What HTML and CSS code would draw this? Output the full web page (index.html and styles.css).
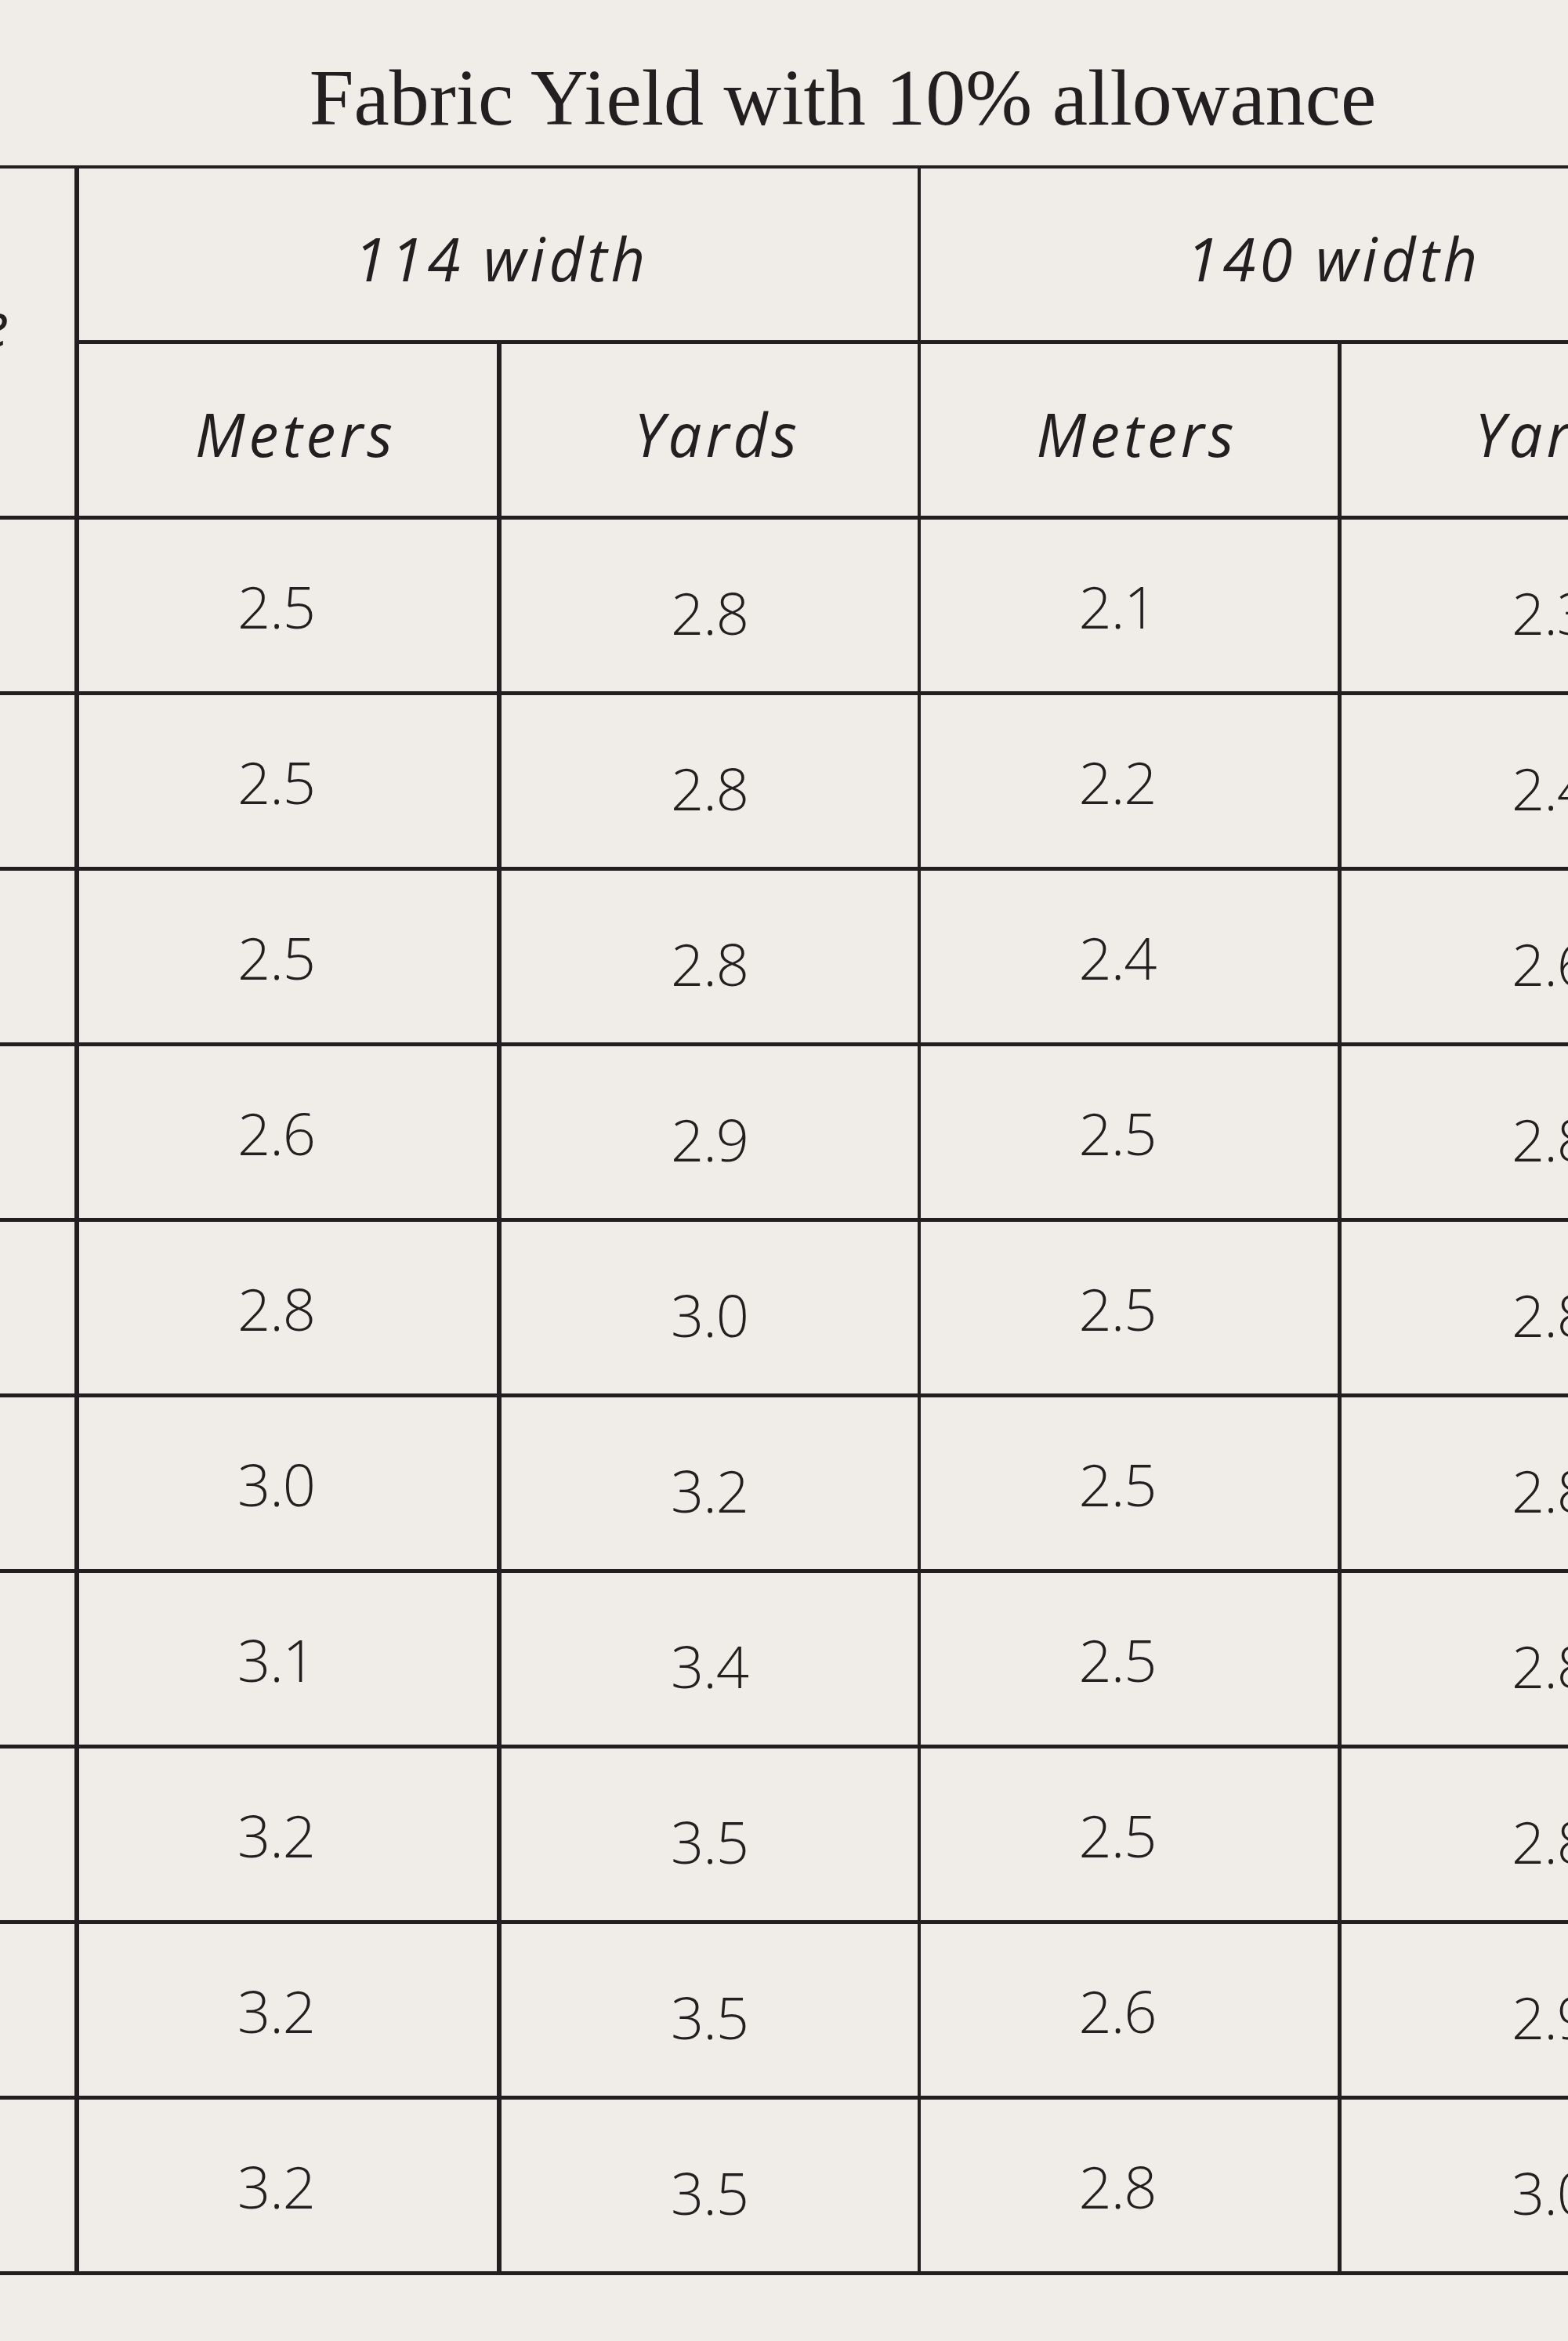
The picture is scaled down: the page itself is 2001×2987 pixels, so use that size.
FILE: index.html
```html
<!DOCTYPE html>
<html lang="en">
<head>
<meta charset="utf-8">
<title>Fabric Yield with 10% allowance</title>
<link rel="stylesheet" href="styles.css">
</head>
<body>
<main class="page">
  <h1 class="title">Fabric Yield with 10% allowance</h1>
  <div class="chart" role="table" aria-label="Fabric Yield with 10% allowance">
    <div class="cell head size c0" role="columnheader">Size</div>
    <div class="cell head group g114" role="columnheader">114 width</div>
    <div class="cell head group g140" role="columnheader">140 width</div>
    <div class="cell head sub m1" role="columnheader">Meters</div>
    <div class="cell head sub y1" role="columnheader">Yards</div>
    <div class="cell head sub m2" role="columnheader">Meters</div>
    <div class="cell head sub y2" role="columnheader">Yards</div>

    <div class="cell c0"></div><div class="cell num m1">2.5</div><div class="cell num y1">2.8</div><div class="cell num m2">2.1</div><div class="cell num y2">2.3</div>
    <div class="cell c0"></div><div class="cell num m1">2.5</div><div class="cell num y1">2.8</div><div class="cell num m2">2.2</div><div class="cell num y2">2.4</div>
    <div class="cell c0"></div><div class="cell num m1">2.5</div><div class="cell num y1">2.8</div><div class="cell num m2">2.4</div><div class="cell num y2">2.6</div>
    <div class="cell c0"></div><div class="cell num m1">2.6</div><div class="cell num y1">2.9</div><div class="cell num m2">2.5</div><div class="cell num y2">2.8</div>
    <div class="cell c0"></div><div class="cell num m1">2.8</div><div class="cell num y1">3.0</div><div class="cell num m2">2.5</div><div class="cell num y2">2.8</div>
    <div class="cell c0"></div><div class="cell num m1">3.0</div><div class="cell num y1">3.2</div><div class="cell num m2">2.5</div><div class="cell num y2">2.8</div>
    <div class="cell c0"></div><div class="cell num m1">3.1</div><div class="cell num y1">3.4</div><div class="cell num m2">2.5</div><div class="cell num y2">2.8</div>
    <div class="cell c0"></div><div class="cell num m1">3.2</div><div class="cell num y1">3.5</div><div class="cell num m2">2.5</div><div class="cell num y2">2.8</div>
    <div class="cell c0"></div><div class="cell num m1">3.2</div><div class="cell num y1">3.5</div><div class="cell num m2">2.6</div><div class="cell num y2">2.9</div>
    <div class="cell c0"></div><div class="cell num m1">3.2</div><div class="cell num y1">3.5</div><div class="cell num m2">2.8</div><div class="cell num y2">3.0</div>
  </div>
</main>
</body>
</html>
```
FILE: styles.css
```css
html, body {
  margin: 0;
  padding: 0;
  overflow: hidden;
  background: #f0ece8;
}

body {
  color: #231f20;
  font-family: "Open Sans", "Liberation Sans", sans-serif;
}

.page {
  width: 2001px;
  min-height: 2987px;
  padding-top: 64px;
  box-sizing: border-box;
  background: #f0ece8;
}

.title {
  margin: 0 0 26px;
  padding-left: 150px;
  font-family: "Liberation Serif", "DejaVu Serif", serif;
  font-weight: 400;
  font-size: 102px;
  line-height: 121px;
  text-align: center;
  color: #231f20;
}

.chart {
  display: grid;
  grid-template-columns: 400px 539px 535px 537px 538px;
  grid-auto-rows: 224px;
  width: 2549px;
  margin-left: -299px;
  border-top: 4px solid #231f20;
}

.cell {
  box-sizing: border-box;
  display: flex;
  align-items: center;
  justify-content: center;
  border-bottom: 5px solid #231f20;
  border-right: 5px solid #231f20;
  line-height: 1;
}

.c0 { border-right-width: 6px; }
.m1 { border-right-width: 6px; }
.y1 { border-right-width: 4px; }
.m2 { border-right-width: 5px; }
.y2 { border-right-width: 5px; }

.head {
  font-style: italic;
  font-weight: 500;
  font-size: 76px;
  letter-spacing: 5px;
  padding-top: 10px;
}

.size {
  grid-row: span 2;
  align-items: flex-start;
  justify-content: flex-end;
  padding-top: 160px;
  padding-right: 84px;
  letter-spacing: 0;
}

.group { grid-column: span 2; }
.g114 { border-right-width: 4px; padding-left: 8px; }
.g140 { border-right-width: 5px; padding-right: 16px; }

.sub { padding-left: 20px; }

.num {
  font-weight: 300;
  font-size: 74px;
  letter-spacing: -1px;
}

.num.m1, .num.m2 {
  padding-right: 30px;
  padding-top: 2px;
}

.num.y1, .num.y2 {
  padding-top: 18px;
}
```
